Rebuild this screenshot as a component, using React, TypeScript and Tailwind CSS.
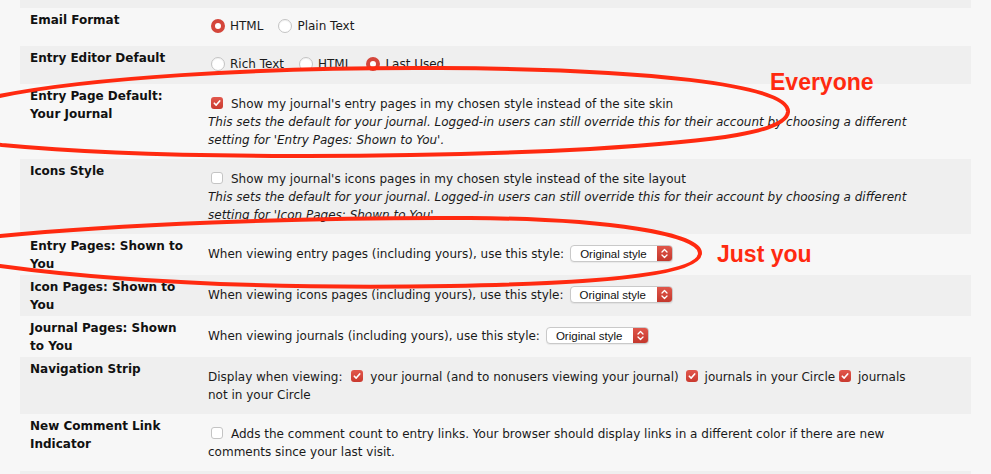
import type { ReactNode } from 'react';

const vera = { fontFamily: '"DejaVu Sans", Verdana, sans-serif' };

function Radio({ checked }: { checked?: boolean }) {
  return checked ? (
    <span className="inline-block h-[14px] w-[14px] rounded-full border-[4.5px] border-[#d4463b] bg-white align-[-3px] ml-[3px] mr-[5px]" />
  ) : (
    <span className="inline-block h-[14px] w-[14px] rounded-full border border-[#c4c4c4] bg-white align-[-3px] ml-[3px] mr-[5px] shadow-[inset_0_1px_1px_rgba(0,0,0,0.06)]" />
  );
}

function Check({ checked, className = '' }: { checked?: boolean; className?: string }) {
  return checked ? (
    <span className={`inline-block h-[12px] w-[12px] rounded-[3px] bg-gradient-to-b from-[#e2574c] to-[#c93a2f] align-[-1px] ${className}`}>
      <svg className="block" width="12" height="12" viewBox="0 0 12 12">
        <path d="M3.3 6.2 L5.2 8.1 L8.7 3.9" fill="none" stroke="white" strokeWidth="1.6" strokeLinecap="round" strokeLinejoin="round" />
      </svg>
    </span>
  ) : (
    <span className={`inline-block h-[12px] w-[12px] rounded-[3px] border border-[#c4c4c4] bg-white align-[-1px] ${className}`} />
  );
}

function StyleSelect() {
  return (
    <span className="inline-flex h-[17px] w-[103px] items-stretch overflow-hidden rounded-[4px] border border-[#c9c9c9] bg-white align-top ml-[6px] shadow-[0_1px_1px_rgba(0,0,0,0.06)]">
      <span className="flex flex-1 items-center pl-[9px] pt-[1px] text-[11.5px] leading-[14px] text-[#111]" style={{ fontFamily: '"Liberation Sans", Arial, sans-serif' }}>
        Original style
      </span>
      <span className="flex w-[15px] items-center justify-center bg-gradient-to-b from-[#e0564a] to-[#c4372c]">
        <svg width="9" height="13" viewBox="0 0 9 13">
          <path d="M2 5 L4.5 2.5 L7 5 M2 8 L4.5 10.5 L7 8" fill="none" stroke="white" strokeWidth="1.3" strokeLinecap="round" strokeLinejoin="round" />
        </svg>
      </span>
    </span>
  );
}

function Row({ label, dark, pad, children }: { label: ReactNode; dark?: boolean; pad: string; children: ReactNode }) {
  return (
    <div className={`flex ${dark ? 'bg-[#efefef]' : 'bg-[#f7f7f7]'}`}>
      <div className="w-[188px] shrink-0 pl-[10px] pt-[3px] text-[12px] font-bold leading-[18px] text-[#111]">{label}</div>
      <div className={`flex-1 text-[12px] leading-[18px] text-[#1a1a1a] whitespace-nowrap ${pad}`}>{children}</div>
    </div>
  );
}

export default function App() {
  return (
    <div className="relative h-[474px] w-[991px] overflow-hidden bg-[#f7f7f7]" style={vera}>
      <div className="mx-[20px] flex flex-col">
        <div className="h-[8px] bg-[#efefef]" />

        <Row label="Email Format" pad="pt-[9px] pb-[11px]">
          <Radio checked />HTML<span className="inline-block w-[12px]" />
          <Radio />Plain Text
        </Row>

        <Row label="Entry Editor Default" dark pad="pt-[9px] pb-[11px]">
          <Radio />Rich Text<span className="inline-block w-[12px]" />
          <Radio />HTML<span className="inline-block w-[12px]" />
          <Radio checked />Last Used
        </Row>

        <Row label={<>Entry Page Default:<br />Your Journal</>} pad="pt-[11px] pb-[10px]">
          <Check checked className="ml-[3px] mr-[8px]" />
          Show my journal's entry pages in my chosen style instead of the site skin
          <br />
          <i>This sets the default for your journal. Logged-in users can still override this for their account by choosing a different</i>
          <br />
          <i>setting for 'Entry Pages: Shown to You'.</i>
        </Row>

        <Row label="Icons Style" dark pad="pt-[11px] pb-[10px]">
          <Check className="ml-[3px] mr-[8px]" />
          Show my journal's icons pages in my chosen style instead of the site layout
          <br />
          <i>This sets the default for your journal. Logged-in users can still override this for their account by choosing a different</i>
          <br />
          <i>setting for 'Icon Pages: Shown to You'.</i>
        </Row>

        <Row label={<>Entry Pages: Shown to<br />You</>} pad="pt-[11px] pb-[12px]">
          When viewing entry pages (including yours), use this style:
          <StyleSelect />
        </Row>

        <Row label={<>Icon Pages: Shown to<br />You</>} dark pad="pt-[11px] pb-[12px]">
          When viewing icons pages (including yours), use this style:
          <StyleSelect />
        </Row>

        <Row label={<>Journal Pages: Shown<br />to You</>} pad="pt-[11px] pb-[12px]">
          When viewing journals (including yours), use this style:
          <StyleSelect />
        </Row>

        <Row label="Navigation Strip" dark pad="pt-[11px] pb-[10px]">
          Display when viewing: <Check checked className="ml-[5px] mr-[7px]" />
          your journal (and to nonusers viewing your journal) <Check checked className="ml-[3px] mr-[7px]" />
          journals in your Circle <Check checked className="mr-[7px]" />
          journals
          <br />
          not in your Circle
        </Row>

        <Row label={<>New Comment Link<br />Indicator</>} pad="pt-[11px] pb-[10px]">
          <Check className="ml-[3px] mr-[8px]" />
          Adds the comment count to entry links. Your browser should display links in a different color if there are new
          <br />
          comments since your last visit.
        </Row>

        <div className="h-[20px] bg-[#efefef]" />
      </div>

      <svg className="pointer-events-none absolute left-0 top-0" width="991" height="474" viewBox="0 0 991 474">
        <path
          d="M788 112 C790 84 640 69 440 68 C260 67 80 78 -10 98 C-45 108 -40 140 2 145 C160 160 420 158 590 149 C720 141 786 132 788 112 Z"
          fill="none"
          stroke="#ff2a10"
          strokeWidth="4"
        />
        <path
          d="M700 253 C700 234 610 219 470 218 C300 217 110 225 0 236 C-40 242 -40 262 0 266 C110 281 260 289 450 286 C620 283 700 272 700 253 Z"
          fill="none"
          stroke="#ff2a10"
          strokeWidth="4"
        />
      </svg>

      <div
        className="absolute left-[770px] top-[68px] text-[23px] font-bold leading-[28px] text-[#ff2a10]"
        style={{ fontFamily: '"Liberation Sans", Arial, sans-serif' }}
      >
        Everyone
      </div>
      <div
        className="absolute left-[717px] top-[240px] text-[23px] font-bold leading-[28px] text-[#ff2a10]"
        style={{ fontFamily: '"Liberation Sans", Arial, sans-serif' }}
      >
        Just you
      </div>
    </div>
  );
}
